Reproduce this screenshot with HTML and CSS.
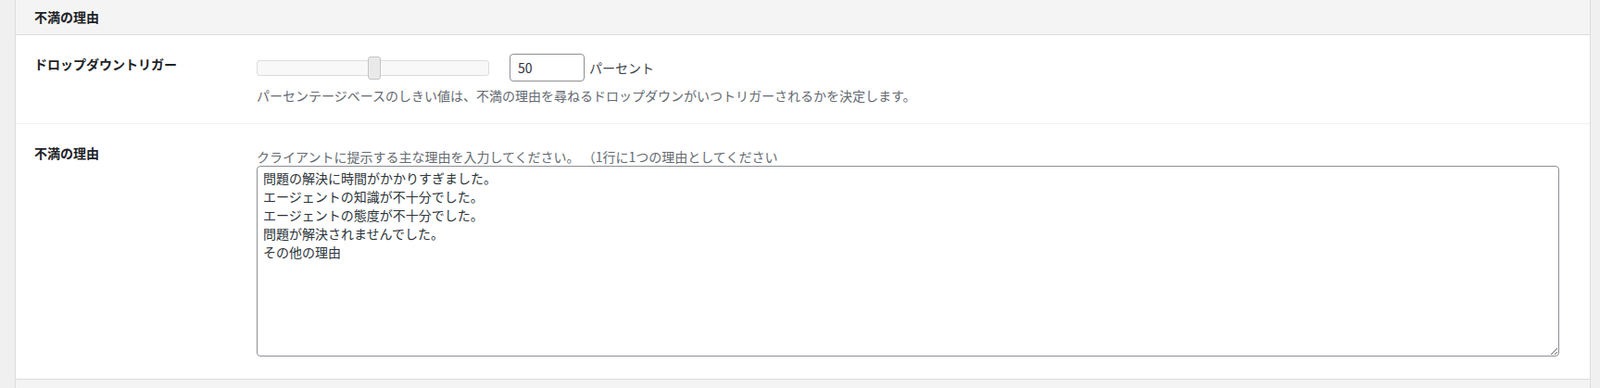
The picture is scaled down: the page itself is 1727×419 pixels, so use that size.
FILE: index.html
```html
<!DOCTYPE html>
<html lang="ja">
<head>
<meta charset="utf-8">
<title>不満の理由</title>
<link rel="stylesheet" href="styles.css">
</head>
<body>
<div class="wrap">
  <div class="panel">
    <div class="panel-head">不満の理由</div>
    <div class="row row-trigger">
      <div class="label label-trigger">ドロップダウントリガー</div>
      <div class="control">
        <div class="control-line">
          <div class="slider">
            <span class="slider-handle" style="left:50%"></span>
          </div>
          <input class="num" type="text" value="50">
          <span class="unit">パーセント</span>
        </div>
        <p class="desc">パーセンテージベースのしきい値は、不満の理由を尋ねるドロップダウンがいつトリガーされるかを決定します。</p>
      </div>
    </div>
    <div class="row row-reasons">
      <div class="label">不満の理由</div>
      <div class="control">
        <p class="hint">クライアントに提示する主な理由を入力してください。 （1行に1つの理由としてください</p>
        <textarea class="reasons">問題の解決に時間がかかりすぎました。
エージェントの知識が不十分でした。
エージェントの態度が不十分でした。
問題が解決されませんでした。
その他の理由</textarea>
      </div>
    </div>
  </div>
  <div class="panel-next"></div>
</div>
</body>
</html>
```

FILE: styles.css
```css
html, body {
  margin: 0;
  padding: 0;
  background: #f0f0f1;
  font-family: "Noto Sans CJK JP", "Noto Sans", sans-serif;
  font-size: 14px;
  color: #1d2327;
}

.wrap {
  padding: 0 10px 0 16px;
}

.panel {
  background: #ffffff;
  border-left: 1px solid #dcdcde;
  border-right: 1px solid #dcdcde;
  border-bottom: 1px solid #dcdcde;
}

.panel-head {
  height: 37px;
  line-height: 37px;
  padding: 0 20px;
  background: #f4f4f4;
  border-bottom: 1px solid #dcdcde;
  font-weight: bold;
  font-size: 14px;
  color: #1d2327;
}

.row {
  display: flex;
  padding: 0 33px 0 20px;
  border-bottom: 1px solid #f0f0f1;
}

.row:last-child {
  border-bottom: none;
}

.row-trigger {
  padding-top: 20px;
  padding-bottom: 20px;
}

.row-reasons {
  padding-top: 21px;
  padding-bottom: 24px;
}

.label {
  width: 240px;
  flex: none;
  font-weight: bold;
  line-height: 20px;
  color: #1d2327;
}

.label-trigger {
  margin-top: 1px;
}

.control {
  flex: 1;
  min-width: 0;
}

.control-line {
  display: flex;
  align-items: center;
  height: 30px;
}

.slider {
  position: relative;
  width: 251px;
  height: 17px;
  box-sizing: border-box;
  border: 1px solid #dddddd;
  border-radius: 3px;
  background: #f8f8f8;
  margin-top: 1px;
}

.slider-handle {
  position: absolute;
  top: -5px;
  width: 14px;
  height: 25px;
  margin-left: -6px;
  box-sizing: border-box;
  border: 1px solid #c5c5c5;
  border-radius: 3px;
  background: #e9e9e9;
}

.num {
  margin: 0 0 0 22px;
  width: 81px;
  height: 30px;
  box-sizing: border-box;
  padding: 0 8px;
  border: 1px solid #8c8f94;
  border-radius: 4px;
  font-family: inherit;
  font-size: 14px;
  color: #2c3338;
  background: #fff;
}

.unit {
  margin-left: 5px;
  color: #3c434a;
  line-height: 20px;
}

.desc {
  margin: 5px 0 0;
  line-height: 20px;
  color: #646970;
}

.hint {
  margin: 5px 0 0;
  line-height: 19px;
  color: #646970;
}

.reasons {
  display: block;
  width: 100%;
  height: 206px;
  box-sizing: border-box;
  margin: 0;
  padding: 2px 6px;
  border: 1px solid #8c8f94;
  border-radius: 4px;
  font-family: inherit;
  font-size: 14px;
  line-height: 20px;
  color: #2c3338;
  background: #fff;
  resize: both;
}

.panel-next {
  height: 20px;
  background: #f4f4f4;
  border-left: 1px solid #dcdcde;
  border-right: 1px solid #dcdcde;
}
```
